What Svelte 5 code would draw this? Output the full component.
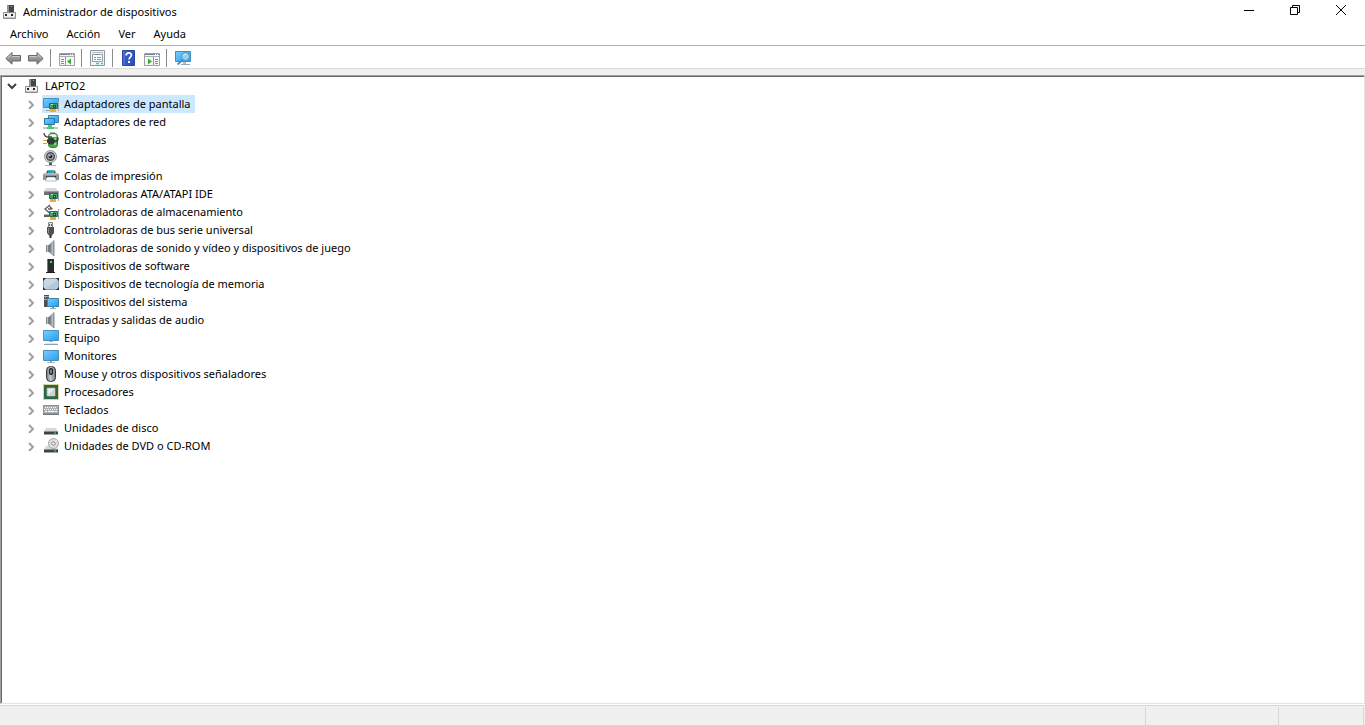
<script>
  const menus = ['Archivo', 'Acción', 'Ver', 'Ayuda'];

  const tools = [
    [{ icon: 'back', label: 'Atrás' }, { icon: 'forward', label: 'Adelante' }],
    [{ icon: 'tree', label: 'Mostrar u ocultar árbol de consola' }],
    [{ icon: 'properties', label: 'Propiedades' }],
    [{ icon: 'help', label: 'Ayuda' }, { icon: 'actions', label: 'Mostrar u ocultar panel de acciones' }],
    [{ icon: 'scan', label: 'Buscar cambios de hardware' }]
  ];

  const devices = [
    { icon: 'display', name: 'Adaptadores de pantalla' },
    { icon: 'network', name: 'Adaptadores de red' },
    { icon: 'battery', name: 'Baterías' },
    { icon: 'camera', name: 'Cámaras' },
    { icon: 'printer', name: 'Colas de impresión' },
    { icon: 'ata', name: 'Controladoras ATA/ATAPI IDE' },
    { icon: 'storage', name: 'Controladoras de almacenamiento' },
    { icon: 'usb', name: 'Controladoras de bus serie universal' },
    { icon: 'speaker', name: 'Controladoras de sonido y vídeo y dispositivos de juego' },
    { icon: 'software', name: 'Dispositivos de software' },
    { icon: 'memory', name: 'Dispositivos de tecnología de memoria' },
    { icon: 'system', name: 'Dispositivos del sistema' },
    { icon: 'speaker', name: 'Entradas y salidas de audio' },
    { icon: 'computer', name: 'Equipo' },
    { icon: 'monitor', name: 'Monitores' },
    { icon: 'mouse', name: 'Mouse y otros dispositivos señaladores' },
    { icon: 'cpu', name: 'Procesadores' },
    { icon: 'keyboard', name: 'Teclados' },
    { icon: 'disk', name: 'Unidades de disco' },
    { icon: 'dvd', name: 'Unidades de DVD o CD-ROM' }
  ];

  let selected = $state('Adaptadores de pantalla');
  let open = $state(true);
</script>

<!-- small expansion card shared by several icons -->
{#snippet card()}
  <path d="M6.5 7.5h8v5h-8z" fill="#4c9a72" stroke="#2a6b4d" />
  <path d="M8 8h2v1h-2z" fill="#a3dcbf" />
  <path d="M10 9h3v3h-3z" fill="#1c4c37" />
  <path d="M11 10h1v1h-1z" fill="#7fd0a5" />
  <path d="M7 13h6v3h-6z" fill="#f8b02c" />
  <path d="M9 13v3M11 13v3" stroke="#e08f1c" stroke-width=".5" />
  <path d="M15.5 5v10" stroke="#a5a9ac" />
{/snippet}

{#snippet drive()}
  <path d="M3 8h10l2 3.5h-14z" fill="#d5d7d8" />
  <path d="M1 11.5h14v3h-14z" fill="#3f4244" />
  <path d="M1 11.5h14" stroke="#888" stroke-width=".6" />
  <path d="M11 12.5h2v1h-2z" fill="#31f04a" />
{/snippet}

{#snippet icon(name)}
  <svg class="icon" viewBox="0 0 16 16" width="16" height="16" aria-hidden="true">
    {#if name === 'root'}
      <path d="M5 1h7v8h-7z" fill="#45484b" />
      <path d="M5 1h2v8h-2z" fill="#909396" />
      <path d="M9 2h1v1h-1z" fill="#4dea5b" />
      <path d="M1.5 8.5h12v6h-12z" fill="#efefef" stroke="#8b8b8b" />
      <path d="M2 13.5h11" stroke="#c8c8c8" />
      <path d="M3 10h2v2h-2zM9 10h2v2h-2z" fill="#222" />
    {:else if name === 'back'}
      <path d="M.8 8.5 7 2.5v3h8.500v5.500h-8.500v3.200z" fill="url(#arrow)" stroke="#686868" />
      <path d="M2.5 8 6.200 4.700M7.500 6.500h7" stroke="#d4d4d4" stroke-width=".8" />
    {:else if name === 'forward'}
      <path d="M15.2 8.5 9 2.5v3h-8.500v5.500h8.500v3.200z" fill="url(#arrow)" stroke="#686868" />
      <path d="M13.5 8 9.800 4.700M8.500 6.500h-7" stroke="#d4d4d4" stroke-width=".8" />
    {:else if name === 'tree' || name === 'actions'}
      <path d="M.5 3.5h15v12h-15z" fill="#f6f8fa" stroke="#9aa0a6" />
      <path d="M1 4h14v1h-14z" fill="#76828c" />
      <path d="M11 4h1v1h-1zM13 4h1v1h-1z" fill="#fff" />
      <path d="M1 6.5h14" stroke="#a7aeb4" />
      {#if name === 'tree'}
        <path d="M6.5 7v8" stroke="#8f99a1" />
        <path d="M2 9.5h3M2 11.5h3M2 13.5h3" stroke="#6c8fb3" />
        <path d="M12 8.5v6l-4-3z" fill="#35ad28" />
      {:else}
        <path d="M9.5 7v8" stroke="#8f99a1" />
        <path d="M11 9.5h3M11 11.5h3M11 13.5h3" stroke="#6c8fb3" />
        <path d="M4 8.5v6l4-3z" fill="#35ad28" />
      {/if}
    {:else if name === 'properties'}
      <path d="M.5 .5h14v15h-14z" fill="#f1f3f4" stroke="#8f969c" />
      <path d="M2.5 4.5h10v7h-10z" fill="#fff" stroke="#949da5" />
      <path d="M2 2.5h11" stroke="#b2bac1" />
      <path d="M5 4.5h4" stroke="#7f8991" />
      <path d="M4 7.5h2M7 7.5h4M4 9.5h2M7 9.5h4" stroke="#8099ac" />
      <path d="M6 13.5h3M11 13.5h2" stroke="#2cc4ee" stroke-width="1.5" />
    {:else if name === 'help'}
      <path d="M1.5 .5h12v15h-12z" fill="url(#blue)" stroke="#2a469f" />
      <path d="M3 1v14" stroke="#6f93e8" stroke-width=".7" />
      <path d="M5.2 5.5c0-3.500 5.200-3.500 5.200-.4 0 2-2.300 2-2.300 4.300" fill="none" stroke="#fff" stroke-width="1.7" />
      <path d="M7 11h2v2h-2z" fill="#fff" />
    {:else if name === 'scan'}
      <path d="M.5 1.5h15v10h-15z" fill="url(#screen)" stroke="#3d8fbc" />
      <path d="M6 14.5h9" stroke="#9aa8b2" />
      <path d="M8 12h3v2h-3z" fill="#b5c0c8" />
      <path d="M8 9.5 2.5 14.5" stroke="#4c8fb8" stroke-width="1.8" />
      <circle cx="10.5" cy="6.5" r="4" fill="#8fd0f5" stroke="#5f93ad" />
      <path d="M8.5 5.8c.7-1.500 2-1.800 3-1.400" fill="none" stroke="#d9f1fd" />
    {:else if name === 'display'}
      <path d="M.5 2.5h15v9h-15z" fill="url(#screen)" stroke="#4a91ba" />
      <path d="M3 14.5h4" stroke="#95a2ac" />
      {@render card()}
    {:else if name === 'network'}
      <path d="M5.5 1.5h10v7h-10z" fill="url(#screen)" stroke="#3d86b0" />
      <path d="M1.5 4.5h10v6h-10z" fill="url(#screen)" stroke="#2b759e" />
      <path d="M5 11h4v3h-4z" fill="#49cb6b" />
      <path d="M0 14h15" stroke="#c2ccc5" stroke-width="2" />
      <path d="M4 14h7" stroke="#3fd267" stroke-width="2" />
    {:else if name === 'battery'}
      <path d="M7 0h5v3h-5z" fill="#b4b9b4" />
      <rect x="5.5" y="1.5" width="9" height="14" rx="3" fill="#3fb043" stroke="#2b7a2f" />
      <path d="M6.5 3c2-1.500 5-1.500 7 0v2h-7z" fill="#e9f7e8" />
      <path d="M12 6v7" stroke="#a6e6a4" stroke-width="1.5" />
      <path d="M1 1c0 3 2 4 5 4h3" fill="none" stroke="#41484b" stroke-width="1.3" />
      <path d="M4 7.5l3-1.500h3l3 3-3 3.500h-3l-3-2z" fill="#34393b" />
      <path d="M12 9.5c2 0 3-1 3-4" fill="none" stroke="#34393b" stroke-width="1.5" />
      <path d="M0 8.5h4M0 11.5h4" stroke="#d5a52a" />
    {:else if name === 'camera'}
      <path d="M2 15.5h11" stroke="#b5b9bb" />
      <path d="M6 12h3v3h-3z" fill="#4f5457" />
      <circle cx="7.5" cy="6.5" r="6" fill="#d3d6d7" stroke="#8b9093" />
      <circle cx="7.5" cy="6.5" r="3.8" fill="#aeb8c0" stroke="#4b5053" stroke-width="1.5" />
      <circle cx="7.5" cy="6.5" r="2" fill="#1f262d" />
      <circle cx="6.8" cy="5.8" r=".8" fill="#dde9f2" />
    {:else if name === 'printer'}
      <path d="M4 2.5h8l1 3.500h-10z" fill="#4b5358" />
      <path d="M5 2.5h5v3h-5z" fill="#209ae8" />
      <path d="M9 2.5h2v3h-2z" fill="#43bd5d" />
      <path d="M1 5h14l1 2v5h-3v-3h-10v3h-3v-5z" fill="#8d959b" />
      <path d="M1 6h14" stroke="#d5dade" />
      <path d="M3 8h10v2h-10z" fill="#2c3439" />
      <path d="M4 9h8l1.500 4h-11z" fill="#fafcfe" stroke="#8d989f" stroke-width=".6" />
    {:else if name === 'ata'}
      <path d="M3 2h10l2 3h-14z" fill="#d8d9da" />
      <path d="M1 5h14v4h-14z" fill="#6d7072" />
      <path d="M1 5.5h14" stroke="#9a9da0" />
      {@render card()}
    {:else if name === 'storage'}
      <path d="M7 1 2 5l4.500 4M5 5h3.500M6.500 2.500l3 2.500" fill="none" stroke="#5c5c5c" stroke-width="1.3" />
      <path d="M1 10h6v1h-6z" fill="#bbb" />
      <path d="M1 11h5v2h-5z" fill="#575b5d" />
      {@render card()}
    {:else if name === 'usb'}
      <path d="M5.5 .5h4v5h-4z" fill="#e3e3e3" stroke="#8a8a8a" />
      <path d="M6 2h1v2h-1zM8 2h1v2h-1z" fill="#666" />
      <path d="M4 5h7v6l-2 2.500h-3l-2-2.500z" fill="#4f5255" />
      <path d="M5.5 6v5" stroke="#8b8f92" />
      <path d="M7.5 13v3" stroke="#303335" stroke-width="2" />
    {:else if name === 'speaker'}
      <path d="M3 5h3v7h-3z" fill="#7b8389" />
      <path d="M4.5 5v7" stroke="#b9c0c5" />
      <path d="M6 5 10 .5v15.500l-4-4z" fill="url(#cone)" />
      <path d="M10 .5h1.500v15.500h-1.500z" fill="#8b959d" />
    {:else if name === 'software'}
      <path d="M4 1h7v13h-7z" fill="#292c2e" />
      <path d="M4.5 1v13" stroke="#777b7e" />
      <path d="M7 3h2v2h-2z" fill="#39eb43" />
      <path d="M3 14.5h9" stroke="#202224" />
    {:else if name === 'memory'}
      <rect x=".5" y="2.5" width="15" height="11" rx="1" fill="#c6d8e6" stroke="#8d99a2" />
      <path d="M1 13h14v-9z" fill="#a9c0d1" opacity=".6" />
      <path d="M0 2h3l-3 3zM16 2h-3l3 3zM0 14h3l-3-3zM16 14h-3l3-3z" fill="#242b30" />
    {:else if name === 'system'}
      <path d="M1 1h5v12h-5z" fill="#4b5156" />
      <path d="M1 2.5h5M1 5.5h4" stroke="#a2a8ad" />
      <path d="M2 3h1v1h-1z" fill="#3bea48" />
      <path d="M4.5 4.5h11v8h-11z" fill="url(#screen)" stroke="#3c86ad" />
      <path d="M9 13h2v1h-2z" fill="#7f929f" />
      <path d="M7 14.5h6" stroke="#9badb9" />
    {:else if name === 'computer'}
      <path d="M.5 .5h15v10h-15z" fill="url(#screen)" stroke="#4b93bd" />
      <path d="M6 11h4v1h-4z" fill="#a1b0ba" />
      <path d="M1 14.5h14" stroke="#8e9fb4" />
      <path d="M2 13.5h12" stroke="#dfe5ea" />
    {:else if name === 'monitor'}
      <path d="M.5 2.5h15v10h-15z" fill="url(#screen)" stroke="#4b8fb6" />
      <path d="M7 13h2v1h-2z" fill="#8b9dab" />
      <path d="M4 14.5h8" stroke="#a9b8c3" />
    {:else if name === 'mouse'}
      <rect x="3.5" y=".5" width="9" height="15" rx="4" fill="url(#metal)" stroke="#33383d" />
      <rect x="6.5" y="2.5" width="3" height="6" rx="1" fill="#39424a" stroke="#1b2025" />
      <path d="M8 4v3" stroke="#c3ced7" />
    {:else if name === 'cpu'}
      <path d="M.5 .5h15v15h-15z" fill="none" stroke="#bba23d" stroke-dasharray="1 1" />
      <path d="M1 1h14v14h-14z" fill="#2e6649" />
      <path d="M4 4h8v8h-8z" fill="#ebedeb" stroke="#a2aaa2" stroke-width=".7" />
      <path d="M11 5v6h-6z" fill="#cfd5d0" />
    {:else if name === 'keyboard'}
      <path d="M0 3h16v9h-16z" fill="#8b949b" />
      <path d="M1 4h14v7h-14z" fill="#a9b1b7" />
      <path d="M2 5.5h12M1 7.5h13" stroke="#fff" stroke-dasharray="1 1" />
      <path d="M2 9.5h2M5 9.5h6M12 9.5h2" stroke="#fff" />
      <path d="M0 12.5h16" stroke="#70787e" />
    {:else if name === 'disk'}
      {@render drive()}
    {:else if name === 'dvd'}
      {@render drive()}
      <circle cx="10.5" cy="5.5" r="5" fill="#dcdddd" stroke="#a4a6a7" />
      <circle cx="10.5" cy="5.5" r="1.7" fill="#fff" stroke="#7e8081" />
      <path d="m12 4 2-2.500M9 7 7.500 9" stroke="#fff" stroke-width=".7" />
    {/if}
  </svg>
{/snippet}

<div class="window">
  <!-- gradients used by the icons -->
  <svg class="defs" width="0" height="0" aria-hidden="true">
    <defs>
      <linearGradient id="screen" x1="0" y1="0" x2="1" y2="1">
        <stop offset="0" stop-color="#7cccfb" />
        <stop offset="1" stop-color="#1fa0f5" />
      </linearGradient>
      <linearGradient id="metal" x1="0" y1="0" x2="1" y2="0">
        <stop offset="0" stop-color="#6b747c" />
        <stop offset=".4" stop-color="#c6ccd1" />
        <stop offset="1" stop-color="#737b82" />
      </linearGradient>
      <linearGradient id="cone" x1="0" y1="0" x2="1" y2="0">
        <stop offset="0" stop-color="#5f666c" />
        <stop offset="1" stop-color="#c3c9ce" />
      </linearGradient>
      <linearGradient id="arrow" x1="0" y1="0" x2="0" y2="1">
        <stop offset="0" stop-color="#b7b7b7" />
        <stop offset="1" stop-color="#777" />
      </linearGradient>
      <linearGradient id="blue" x1="0" y1="0" x2="1" y2="1">
        <stop offset="0" stop-color="#3a5dc8" />
        <stop offset="1" stop-color="#2c50c0" />
      </linearGradient>
    </defs>
  </svg>

  <header class="titlebar">
    {@render icon('root')}
    <h1>Administrador de dispositivos</h1>
    <div class="controls">
      <button aria-label="Minimizar">
        <svg width="10" height="10"><path d="M0 5.5h10" /></svg>
      </button>
      <button aria-label="Restaurar">
        <svg width="10" height="10"><path d="M.5 2.5h7v7h-7zM2.5 2v-1.500h7v7h-1.500" /></svg>
      </button>
      <button aria-label="Cerrar">
        <svg width="10" height="10"><path d="M0 0l10 10M10 0l-10 10" /></svg>
      </button>
    </div>
  </header>

  <nav class="menu">
    {#each menus as menu}
      <button>{menu}</button>
    {/each}
  </nav>

  <div class="toolbar" role="toolbar" aria-label="Herramientas">
    {#each tools as group}
      <div class="group">
        {#each group as tool}
          <button aria-label={tool.label}>{@render icon(tool.icon)}</button>
        {/each}
      </div>
    {/each}
  </div>

  <main>
    <div class="row root">
      <button class="toggle" aria-label="LAPTO2" aria-expanded={open} onclick={() => (open = !open)}>
        <svg width="10" height="10" class:closed={!open}><path d="M1 3l4 4 4-4" /></svg>
      </button>
      <button class="item">{@render icon('root')}<span>LAPTO2</span></button>
    </div>
    {#if open}
      <ul>
        {#each devices as device}
          <li class="row">
            <button class="toggle" aria-label={device.name}>
              <svg width="10" height="10"><path d="M3 2l4 4-4 4" /></svg>
            </button>
            <button
              class="item"
              class:selected={selected === device.name}
              onclick={() => (selected = device.name)}
            >
              {@render icon(device.icon)}<span>{device.name}</span>
            </button>
          </li>
        {/each}
      </ul>
    {/if}
  </main>

  <footer>
    <div class="message"></div>
    <div class="panel wide"></div>
    <div class="panel"></div>
  </footer>
</div>

<style>
  :global(body) {
    margin: 0;
    background: #fff;
  }

  .window {
    display: flex;
    flex-direction: column;
    height: 100vh;
    overflow: hidden;
    background: #f0f0f0;
    color: #000;
    font: 11px/18px 'Noto Sans', sans-serif;
  }

  button {
    display: flex;
    align-items: center;
    padding: 0;
    border: 0;
    background: none;
    color: inherit;
    font: inherit;
    white-space: nowrap;
  }

  .icon {
    display: block;
    flex: none;
  }

  .defs {
    position: absolute;
  }

  .titlebar {
    display: flex;
    align-items: center;
    height: 24px;
    padding: 0 1px 0 2px;
    background: #fff;
  }

  h1 {
    margin: 0 0 0 5px;
    font-size: 11px;
    font-weight: normal;
  }

  .controls {
    display: flex;
    align-self: flex-start;
    margin-left: auto;
  }

  .controls button {
    justify-content: center;
    width: 46px;
    height: 20px;
  }

  .controls path {
    fill: none;
    stroke: #000;
  }

  .menu {
    display: flex;
    gap: 2px;
    height: 21px;
    padding-left: 2px;
    border-bottom: 1px solid #b0b0b4;
    background: #fff;
  }

  .menu button {
    padding: 0 8px 2px;
  }

  .toolbar {
    display: flex;
    align-items: center;
    height: 21px;
    padding: 1px 0 0 1px;
    border-bottom: 1px solid #dadada;
    background: #fff;
    margin-bottom: 6px;
  }

  .group {
    display: flex;
  }

  .group + .group {
    margin-left: 3px;
    padding-left: 4px;
    border-left: 1px solid #8d8d8d;
  }

  .group button {
    width: 23px;
    height: 18px;
    padding-left: 4px;
  }

  main {
    flex: 1;
    overflow: auto;
    border: 1px solid #e3e3e3;
    border-top-color: #a0a0a0;
    border-left-color: #a0a0a0;
    box-shadow: inset 1px 1px #696969;
    background: #fff;
    padding: 1px 0 0 1px;
  }

  ul {
    margin: 0;
    padding: 0 0 0 19px;
    list-style: none;
  }

  .row {
    display: flex;
    height: 18px;
  }

  .toggle {
    width: 21px;
    padding-left: 5px;
  }

  .toggle path {
    fill: none;
    stroke: #a0a0a0;
    stroke-width: 2;
  }

  .root .toggle path {
    stroke: #404040;
  }

  .closed {
    transform: rotate(-90deg);
  }

  .item {
    gap: 5px;
    padding: 0 4px 0 1px;
  }

  .selected {
    background: #cce8ff;
  }

  footer {
    display: flex;
    height: 19px;
    margin-top: 1px;
    padding-right: 1px;
    border-top: 1px solid #d7d7d7;
    box-shadow: 0 -1px #fff;
  }

  .message {
    flex: 1;
  }

  .panel {
    width: 84px;
    margin-top: 1px;
    border-left: 1px solid #d7d7d7;
  }

  .panel:last-child {
    border-right: 1px solid #d7d7d7;
  }

  .wide {
    width: 132px;
  }
</style>
